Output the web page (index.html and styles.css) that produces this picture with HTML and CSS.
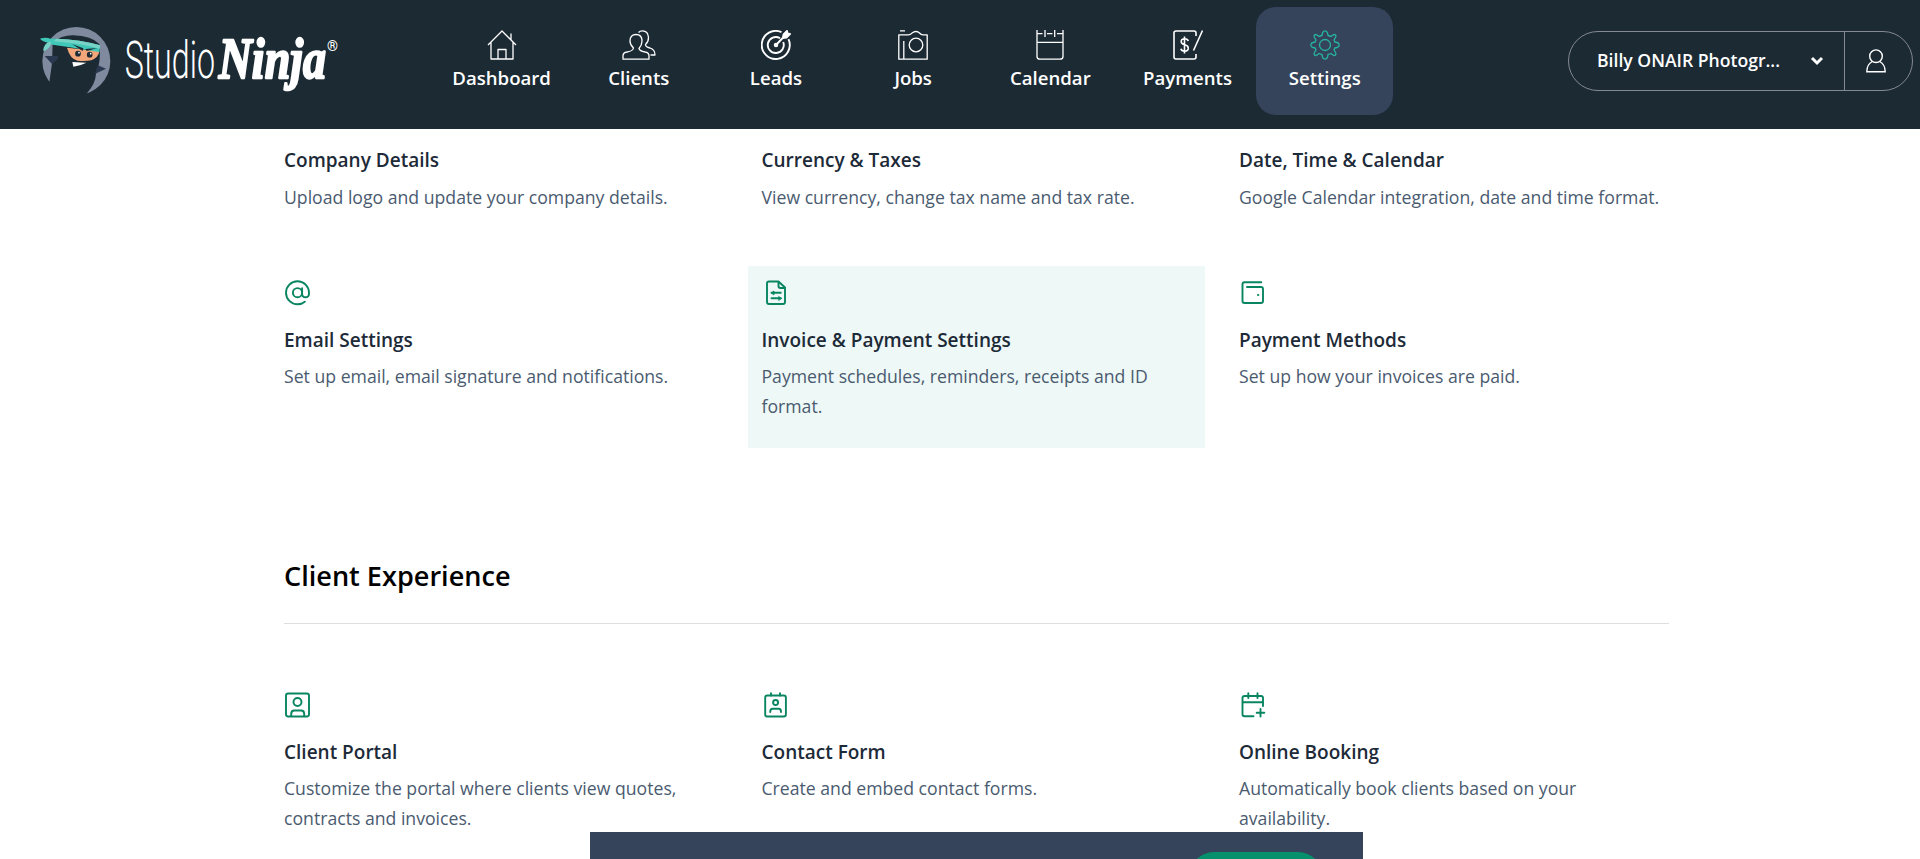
FILE: index.html
```html
<!DOCTYPE html>
<html lang="en">
<head>
<meta charset="utf-8">
<title>Studio Ninja – Settings</title>
<link rel="stylesheet" href="styles.css">
</head>
<body>
<header class="topbar">
  <a class="logo" aria-label="Studio Ninja">
    <svg width="303" height="70" viewBox="54 75 909 210">
      <circle cx="169" cy="183" r="102" fill="#7f8a9e"/>
      <path fill="#1c2a34" d="M96 190 98 128Q125 105 160 106 215 108 238 132 242 170 236 196L228 222Q226 252 202 278L190 290H110L88 247Z"/>
      <path fill="#2b3950" d="M74 168 114 168 114 176 96 192ZM234 196 258 206 224 222Z"/>
      <path fill="#f2a679" d="M141 143 238 154Q236 172 214 181 195 185 172 182 150 176 141 143Z"/>
      <path fill="#3fc8b8" d="M60 116Q76 110 92 116L110 116Q180 118 240 136L238 156 150 142 98 134 84 128Q66 124 60 116Z"/>
      <path fill="#77d3c6" d="M90 124Q68 134 70 154 88 148 94 130ZM110 116Q180 118 240 136L239 146Q180 130 100 124Z"/>
      <path fill="#1c2a34" d="M156 132 190 145 188 153ZM232 144 196 147 200 153Z"/>
      <circle cx="174" cy="161" r="8.500" fill="#1c2a34"/><circle cx="209" cy="164" r="8.500" fill="#1c2a34"/>
      <circle cx="177" cy="158" r="2.500" fill="#fff"/><circle cx="212" cy="161" r="2.500" fill="#fff"/>
      <path fill="#fff" d="M157 186 199 188Q180 198 160 200Z"/>
      <text class="logo-thin" x="314" y="234" textLength="271" lengthAdjust="spacingAndGlyphs">Studio</text>
      <text class="logo-bold" x="596" y="234" textLength="322" lengthAdjust="spacingAndGlyphs">Ninja</text>
      <text class="logo-reg" x="921" y="152">®</text>
    </svg>
  </a>
  <nav class="nav">
    <a class="nav-item"><svg width="30" height="30" viewBox="0 0 30 30"><path d="M1 15 15 1 29 15M4 12.500V29H26V12.500M11 29V19.500H19V29M24 10V3.500"/></svg>Dashboard</a>
    <a class="nav-item"><svg width="34" height="30" viewBox="0 0 34 30"><path d="M1 29.200V26Q1 22.500 5 22 11 21 11.500 18 8 15 8 11 8 4.500 14 4.500T20 11Q20 15 17 18.500 17.500 21 23 22 27 22.500 27 26V29.200ZM16.500 2.500Q18 .8 20.500.8 26 .8 26.500 7.500 26.500 12 23.500 14.500 23.500 17 28 18 33 19.500 33 25H28.500"/></svg>Clients</a>
    <a class="nav-item nav-item-heavy"><svg width="30" height="30" viewBox="0 0 30 30"><path d="M20.500 2.200A14 14 0 1 0 27.500 9.200M19 8.200A8 8 0 1 0 22.200 12M15 15 25 4.500"/><circle cx="15" cy="15" r="1.300"/><path class="solid" d="M22 8 22.500 4.500 26 1 26.500 3.500 29 4 25.500 7.500Z"/></svg>Leads</a>
    <a class="nav-item"><svg width="30" height="30" viewBox="0 0 30 30"><path d="M.8 4.800H10.500Q13 4.800 14 3 16 1.500 18 1.500T21.500 3Q23 4.800 25 4.800H29.200V29.200H.8ZM5.800 11V29M2 .8H7"/><circle cx="18" cy="15" r="6.800"/></svg>Jobs</a>
    <a class="nav-item"><svg width="28" height="30" viewBox="0 0 28 30"><path d="M1 0V26.500Q1 29.200 4 29.200H24Q27 29.200 27 26.500V0M1 3.700H6.500M11 3.700H16.500M21 3.700H27M9 0V7M18.700 0V7M1 12.300H27"/></svg>Calendar</a>
    <a class="nav-item nav-item-mid"><svg width="30" height="30" viewBox="0 0 30 30"><path d="M23 6V3Q23 1 21 1H3Q1 1 1 3V27Q1 29 3 29H21Q23 29 23 27V24M29.500.5 20.500 20.500M11.500 6.500V23.500M15.300 11Q14.500 8.800 11.800 8.800 8.200 8.800 8.200 11.500 8.200 14 11.800 14.800 15.300 15.700 15.300 18.300 15.300 21.200 11.600 21.200 8.500 21.200 7.800 18.800"/></svg>Payments</a>
    <a class="nav-item nav-item-active"><svg width="30" height="30" viewBox="0 0 30 30"><path d="M12.500 3Q13 .8 15 .8T17.500 3L18 5.500Q20 6 21 6.500L23 5Q24.500 4 25.500 5T25.500 7.500L24 10Q24.500 11 24.800 12L27 12.500Q29.200 13 29.200 15T27 17.500L24.800 18Q24.500 19 24 20L25.500 22.500Q26.500 24 25.500 25T23 25L21 23.500Q20 24 18 24.500L17.500 27Q17 29.200 15 29.200T12.500 27L12 24.500Q10 24 9 23.500L7 25Q5.500 26 4.500 25T4.500 22.500L6 20Q5.500 19 5.200 18L3 17.500Q.8 17 .8 15T3 12.500L5.200 12Q5.500 11 6 10L4.500 7.500Q3.500 6 4.500 5T7 5L9 6.500Q10 6 12 5.500Z"/><circle cx="15" cy="15" r="5.500"/></svg>Settings</a>
  </nav>
  <div class="account">
    <button class="account-name"><span>Billy ONAIR Photogr...</span><svg width="14" height="10" viewBox="0 0 14 10"><path d="M2 2 7 7 12 2"/></svg></button>
    <button class="account-user" aria-label="Account"><svg width="20" height="24" viewBox="0 0 20 24"><circle cx="10" cy="7.200" r="6.300"/><path d="M6.200 12.500Q.8 15.500.8 22.800H19.200Q19.200 15.500 13.800 12.500"/></svg></button>
  </div>
</header>

<main class="content">
  <section class="cards cards-first">
    <a class="card"><h3>Company Details</h3><p>Upload logo and update your company details.</p></a>
    <a class="card"><h3>Currency &amp; Taxes</h3><p>View currency, change tax name and tax rate.</p></a>
    <a class="card"><h3>Date, Time &amp; Calendar</h3><p>Google Calendar integration, date and time format.</p></a>
  </section>
  <section class="cards">
    <a class="card"><svg class="icon" viewBox="0 0 28 28"><circle cx="13.500" cy="13.700" r="4.600"/><path d="M18.100 9.100V14.700Q18.100 18.200 21.500 18.200T25 14.700V13.700A11.500 11.500 0 1 0 13.500 25.200Q18 25.200 20.800 22.700"/></svg><h3>Email Settings</h3><p>Set up email, email signature and notifications.</p></a>
    <a class="card card-active"><svg class="icon" viewBox="0 0 28 28"><path d="M16.500 2.500H7Q5 2.500 5 4.500V23Q5 25 7 25H21Q23 25 23 23V8.500ZM16.500 2.500V7Q16.500 9 18.500 9H23M9.500 13.800H18.800M9.500 19.300H18.800"/><path class="arrow" d="M9.500 13.800 12 12V15.600ZM19.200 19.300 16.700 17.500V21.100Z"/></svg><h3>Invoice &amp; Payment Settings</h3><p>Payment schedules, reminders, receipts and ID format.</p></a>
    <a class="card"><svg class="icon" viewBox="0 0 28 28"><path d="M22.300 3.300H5.500Q3.500 3.300 3.500 5.500V22Q3.500 24 5.500 24H22Q24 24 24 22V10Q24 8 22 8H8"/><circle class="arrow" cx="19" cy="16" r=".7"/></svg><h3>Payment Methods</h3><p>Set up how your invoices are paid.</p></a>
  </section>

  <h2 class="section-title">Client Experience</h2>

  <section class="cards">
    <a class="card"><svg class="icon" viewBox="0 0 28 28"><rect x="2" y="2.500" width="23" height="23" rx="2.200"/><circle cx="13.500" cy="11" r="4"/><path d="M7.200 25V23Q7.200 19.500 10.200 19.500H17.200Q20.200 19.500 20.200 23V25"/></svg><h3>Client Portal</h3><p>Customize the portal where clients view quotes, contracts and invoices.</p></a>
    <a class="card"><svg class="icon" viewBox="0 0 28 28"><rect x="3.200" y="4.500" width="20.700" height="21" rx="2"/><path d="M9 2.200V4.500M18 2.200V4.500M8.200 21Q8.200 17.800 10.700 17.800H16.700Q19 17.800 19 21"/><circle cx="13.600" cy="11.500" r="2.500"/></svg><h3>Contact Form</h3><p>Create and embed contact forms.</p></a>
    <a class="card"><svg class="icon" viewBox="0 0 28 28"><path d="M24 15V7Q24 5 22 5H5.500Q3.500 5 3.500 7V23Q3.500 25.300 5.500 25.300H14.500M3.500 11.300H24M9.300 2.200V7M18.500 2.200V7M21.500 18V25.500M17.700 21.800H25.300"/></svg><h3>Online Booking</h3><p>Automatically book clients based on your availability.</p></a>
  </section>
</main>

<div class="notice"><button class="notice-action" aria-label="Accept"></button></div>
</body>
</html>
```
FILE: styles.css
```css
* { box-sizing: border-box; }
html, body { height: 100%; overflow: hidden; }
body { margin: 0; background: #fff; font-family: "Open Sans", "Noto Sans", sans-serif; color: #1d2a38; }
button { font: inherit; color: inherit; background: none; border: 0; padding: 0; }
svg { display: block; }

.topbar { display: flex; height: 129px; padding: 0 7px 0 38px; background: #1c2a34; color: #fff; }
.logo { width: 395px; padding-top: 25px; }
.logo svg { overflow: visible; }
.logo text { fill: #fff; }
.logo-thin { font: 300 158px Roboto, sans-serif; }
.logo-bold { font: italic 700 174px "Liberation Serif", serif; stroke: #fff; stroke-width: 7px; stroke-linejoin: round; }
.logo-reg { font: 700 42px Roboto, sans-serif; }

.nav { display: flex; padding-top: 7px; }
.nav-item { display: flex; flex-direction: column; align-items: center; gap: 5px; width: 137.200px; height: 108px; padding-top: 23px; border-radius: 20px; font-size: 18.600px; line-height: 25px; font-weight: 600; }
.nav-item svg { fill: none; stroke: #fff; stroke-width: 1.300; stroke-linejoin: round; }
.nav-item .solid { fill: #fff; }
.nav-item-heavy svg { stroke-width: 1.900; }
.nav-item-mid svg { stroke-width: 1.600; }
.nav-item-active { background: #35435b; }
.nav-item-active svg { stroke: #25b5a0; }

.account { display: flex; width: 345px; height: 60px; margin: 31px 0 0 auto; border: 1px solid #858896; border-radius: 30px; }
.account-name { display: flex; align-items: center; justify-content: space-between; width: 275px; padding: 0 20px 0 28px; font-size: 17.600px; font-weight: 600; }
.account-name span { padding-bottom: 2px; }
.account-user { display: flex; flex: 1; align-items: center; justify-content: center; padding-right: 6px; border-left: 1px solid #858896; }
.account svg { fill: none; stroke: #fff; stroke-width: 1.400; }
.account-name svg { stroke-width: 3; }

.content { width: 1412px; margin-left: 270px; }
.cards { display: grid; grid-template-columns: repeat(3, 457px); column-gap: 20.500px; }
.cards-first { height: 137px; padding-top: 5px; }
.card { height: 182px; padding: 13px 19px 13px 14px; }
.card-active { background: #eef8f6; }
.icon { width: 28px; height: 28px; fill: none; stroke: #098561; stroke-width: 1.900; stroke-linecap: round; stroke-linejoin: round; }
.icon .arrow { fill: #098561; stroke-width: .8; }
.card h3 { margin: 0; font-size: 19px; line-height: 26px; font-weight: 600; }
.icon + h3 { margin-top: 20px; }
.card p { margin: 8px 0 0; font-size: 17.650px; line-height: 30px; color: #4a5b70; }
.cards-first p { margin-top: 9px; }

.section-title { margin: 108px 13px 54px 14px; height: 68px; border-bottom: 1px solid #dcdee0; color: #000; font-size: 27.100px; line-height: 40px; font-weight: 600; }

.notice { position: fixed; left: 590px; bottom: 0; display: flex; justify-content: flex-end; width: 773px; height: 27px; padding: 20px 40px 0 0; background: #35435b; overflow: hidden; }
.notice-action { flex: none; width: 134px; height: 50px; border-radius: 25px; background: #06906c; }
```
